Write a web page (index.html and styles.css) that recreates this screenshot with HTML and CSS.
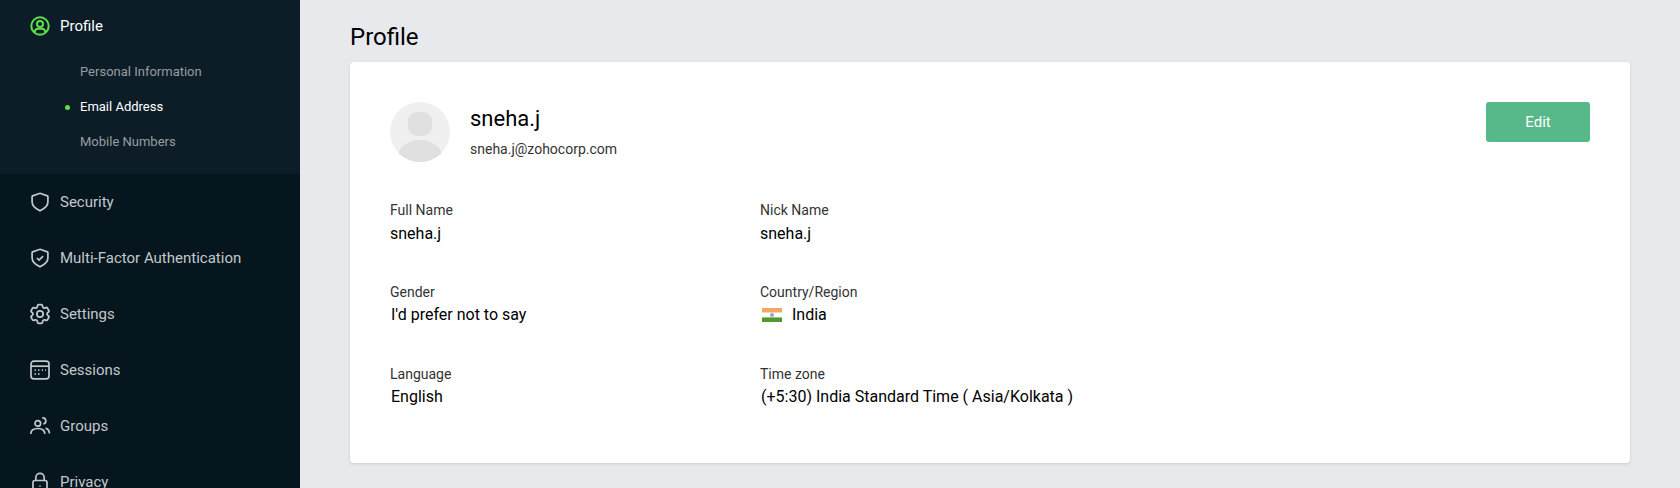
FILE: index.html
```html
<!DOCTYPE html>
<html lang="en">
<head>
<meta charset="utf-8">
<title>Profile</title>
<link rel="stylesheet" href="styles.css">
</head>
<body>
<div class="app">
  <nav class="sidebar">
    <div class="group">
      <a class="item active">
        <svg class="icon" viewBox="0 0 20 20"><circle cx="10" cy="10" r="8.700"/><circle cx="10" cy="7.900" r="3"/><path d="M4.400 16.400c.5-2.700 2.400-3.700 3.600-3.700h4c1.200 0 3.100 1 3.600 3.700"/></svg>
        <span>Profile</span>
      </a>
      <ul class="subs">
        <li>Personal Information</li>
        <li class="current">Email Address</li>
        <li>Mobile Numbers</li>
      </ul>
    </div>
    <a class="item">
      <svg class="icon" viewBox="0 0 20 20"><path d="M10 1.300l7.400 2.600c.3.1.5.4.5.7v5.200c0 4-3 6.800-7.600 8.800a.8.8 0 0 1-.6 0C5.100 16.600 2.100 13.800 2.100 9.800V4.600c0-.3.2-.6.5-.7z"/></svg>
      <span>Security</span>
    </a>
    <a class="item">
      <svg class="icon" viewBox="0 0 20 20"><path d="M10 1.300l7.400 2.600c.3.1.5.4.5.7v5.200c0 4-3 6.800-7.600 8.800a.8.8 0 0 1-.6 0C5.100 16.600 2.100 13.800 2.100 9.800V4.600c0-.3.2-.6.5-.7z"/><path d="M6.900 10l2.200 2.100 4-4"/></svg>
      <span>Multi-Factor Authentication</span>
    </a>
    <a class="item">
      <svg class="icon" viewBox="2.400 2.400 19.200 19.200"><circle cx="12" cy="12" r="3"/><path d="M9.594 3.940c.09-.542.56-.94 1.110-.94h2.593c.55 0 1.020.398 1.110.94l.213 1.281c.063.374.313.686.645.870.074.04.147.083.22.127.325.196.72.257 1.075.124l1.217-.456a1.125 1.125 0 0 1 1.370.49l1.296 2.247a1.125 1.125 0 0 1-.26 1.431l-1.003.827c-.293.241-.438.613-.43.992a7.723 7.723 0 0 1 0 .255c-.008.378.137.75.43.991l1.004.827c.424.35.534.955.26 1.430l-1.298 2.247a1.125 1.125 0 0 1-1.369.491l-1.217-.456c-.355-.133-.75-.072-1.076.124a6.470 6.470 0 0 1-.22.128c-.331.183-.581.495-.644.869l-.213 1.281c-.09.543-.56.94-1.110.94h-2.594c-.55 0-1.019-.398-1.110-.94l-.213-1.281c-.062-.374-.312-.686-.644-.870a6.520 6.520 0 0 1-.22-.127c-.325-.196-.72-.257-1.076-.124l-1.217.456a1.125 1.125 0 0 1-1.369-.49l-1.297-2.247a1.125 1.125 0 0 1 .26-1.431l1.004-.827c.292-.24.437-.613.43-.991a6.932 6.932 0 0 1 0-.255c.007-.38-.138-.751-.43-.992l-1.004-.827a1.125 1.125 0 0 1-.26-1.430l1.297-2.247a1.125 1.125 0 0 1 1.370-.491l1.216.456c.356.133.751.072 1.076-.124.072-.044.146-.086.22-.128.332-.183.582-.495.644-.869l.214-1.280z"/></svg>
      <span>Settings</span>
    </a>
    <a class="item">
      <svg class="icon" viewBox="0 0 20 20"><rect x="1" y="1.200" width="18" height="17.600" rx="2.800"/><path d="M1 6.200h18"/><path class="dots" d="M4.600 10.100h1.200M8.200 10.100h1.200M11.800 10.100h1.200M15 10.100h.8M4.600 14h1.200M8.200 14h1.200"/></svg>
      <span>Sessions</span>
    </a>
    <a class="item">
      <svg class="icon" viewBox="0 0 20 20"><circle cx="7.800" cy="7.400" r="2.800"/><path d="M.8 18c0-3.600 2.900-5.500 7-5.500s7 1.900 7 5.500"/><path d="M12.200 2a3 3 0 0 1 1.200 5.900M15.600 12.100c2.400.8 3.800 2.700 3.800 5.300"/></svg>
      <span>Groups</span>
    </a>
    <a class="item">
      <svg class="icon" viewBox="0 0 20 20"><rect x="3" y="8.500" width="14" height="11" rx="2"/><path d="M5.800 8.500V5.600a4.200 4.200 0 0 1 8.400 0v2.900"/><path class="dots" d="M9.500 14h1"/></svg>
      <span>Privacy</span>
    </a>
  </nav>
  <main class="main">
    <h1 class="title">Profile</h1>
    <section class="card">
      <header class="head">
        <div class="avatar">
          <svg viewBox="0 0 60 60"><circle cx="30" cy="30" r="30" fill="#f0f0f0"/><rect x="18" y="10" width="24" height="24" rx="9" fill="#e0e0e0"/><path d="M8.500 51C10 44 19 38 30 38s20 6 21.500 13A30 30 0 0 1 30 60 30 30 0 0 1 8.500 51z" fill="#e0e0e0"/></svg>
        </div>
        <div class="who">
          <div class="name">sneha.j</div>
          <div class="email">sneha.j@zohocorp.com</div>
        </div>
        <button class="edit">Edit</button>
      </header>
      <div class="fields">
        <div class="field"><div class="label">Full Name</div><div class="value">sneha.j</div></div>
        <div class="field"><div class="label">Nick Name</div><div class="value">sneha.j</div></div>
        <div class="field"><div class="label">Gender</div><div class="value inset">I'd prefer not to say</div></div>
        <div class="field"><div class="label">Country/Region</div>
          <div class="value country">
            <svg class="flag" viewBox="0 0 20 14"><rect width="20" height="4.700" fill="#f4a663"/><rect y="4.700" width="20" height="4.700" fill="#fff"/><rect y="9.400" width="20" height="4.600" fill="#4f9a2d"/><circle cx="10" cy="7" r="2" fill="#9a9fd6"/></svg>
            <span>India</span>
          </div>
        </div>
        <div class="field"><div class="label">Language</div><div class="value inset">English</div></div>
        <div class="field"><div class="label">Time zone</div><div class="value inset">(+5:30) India Standard Time ( Asia/Kolkata )</div></div>
      </div>
    </section>
  </main>
</div>
</body>
</html>
```
FILE: styles.css
```css
* { box-sizing: border-box; }
html, body { margin: 0; height: 100%; }
body { font-family: Roboto, "Liberation Sans", sans-serif; background: #e8e9ed; overflow: hidden; }
.app { display: flex; height: 488px; overflow: hidden; }

.sidebar { width: 300px; flex: none; background: #05161f; color: #c3c8cb; }
.group { background: #0c1d28; height: 174px; }
.item { display: flex; align-items: center; gap: 10px; height: 56px; padding-left: 30px; font-size: 15px; }
.group .item { height: 52px; }
.item.active { color: #fff; }
.icon { width: 20px; height: 20px; flex: none; fill: none; stroke: #c3c8cb; stroke-width: 1.700; overflow: visible; }
.active .icon { stroke: #5fe04a; stroke-width: 2; }
.dots { stroke-width: 1.800; }
.subs { list-style: none; margin: 0; padding: 2px 0 0 80px; font-size: 13px; color: #969da2; }
.subs li { height: 35px; line-height: 35px; position: relative; }
.subs .current { color: #fff; }
.subs .current::before { content: ""; position: absolute; left: -15px; top: 16px; width: 5px; height: 5px; border-radius: 50%; background: #5fe04a; }

.main { flex: 1; padding: 0 50px; }
.title { margin: 0; height: 62px; padding-top: 21px; font-size: 24px; line-height: 32px; font-weight: 400; color: #000; }
.card { height: 401px; background: #fff; border-radius: 4px; box-shadow: 0 1px 3px rgba(0,0,0,.12); padding: 40px; }
.head { display: flex; align-items: flex-start; }
.avatar { width: 60px; height: 60px; flex: none; margin-right: 20px; }
.avatar svg { display: block; width: 60px; height: 60px; }
.who { flex: 1; }
.name { font-size: 22px; line-height: 32px; margin-top: 1px; color: #000; }
.email { font-size: 14px; line-height: 20px; margin-top: 4px; color: #333; }
.edit { width: 104px; height: 40px; border: 0; border-radius: 3px; background: #57b98a; color: #fff; font: 15px Roboto, sans-serif; }

.fields { display: grid; grid-template-columns: 370px 1fr; row-gap: 30px; margin-top: 38px; }
.field { height: 52px; }
.field:nth-child(-n+2) .value { margin-top: 1px; }
.label { font-size: 14px; line-height: 20px; color: #333; }
.value { font-size: 16px; line-height: 26px; color: #000; }
.inset { padding-left: 1px; }
.country { display: flex; align-items: center; gap: 10px; padding-left: 2px; }
.flag { width: 20px; height: 14px; flex: none; }
```
